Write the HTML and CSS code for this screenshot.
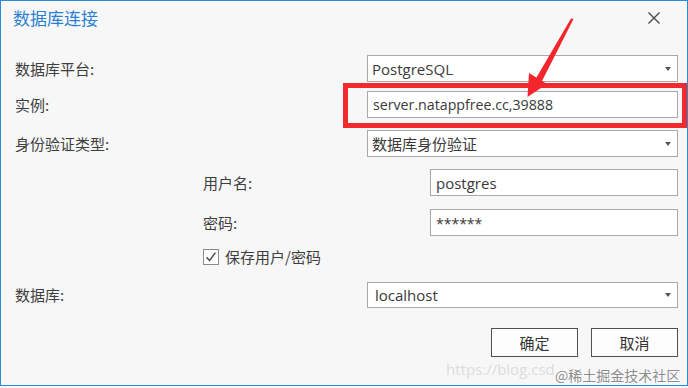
FILE: index.html
```html
<!DOCTYPE html>
<html lang="zh-CN">
<head>
<meta charset="utf-8">
<title>数据库连接</title>
<link rel="stylesheet" href="styles.css">
</head>
<body>
<div class="window">
  <div class="titlebar">
    <span class="title">数据库连接</span>
    <svg class="close" width="14" height="14" viewBox="0 0 14 14"><path d="M1.5 1.5 L12.5 12.5 M12.5 1.5 L1.5 12.5" stroke="#4a4a4a" stroke-width="1.4" fill="none"/></svg>
  </div>
  <div class="form">
    <div class="row r1">
      <span class="lbl">数据库平台:</span>
      <div class="field select">PostgreSQL<span class="caret"></span></div>
    </div>
    <div class="row r2">
      <span class="lbl">实例:</span>
      <div class="field inst">server.natappfree.cc,39888</div>
    </div>
    <div class="row r3">
      <span class="lbl">身份验证类型:</span>
      <div class="field select">数据库身份验证<span class="caret"></span></div>
    </div>
    <div class="row sub r4">
      <span class="lbl">用户名:</span>
      <div class="field">postgres</div>
    </div>
    <div class="row sub r5">
      <span class="lbl">密码:</span>
      <div class="field pw">******</div>
    </div>
    <div class="row sub r6">
      <span class="check">
        <svg width="16" height="16" viewBox="0 0 16 16"><rect x="0.5" y="0.5" width="15" height="15" fill="#fff" stroke="#8a8a8a"/><path d="M3.5 8.2 L6.6 11.6 L12.4 3.6" stroke="#555" stroke-width="1.6" fill="none"/></svg>
      </span>
      <span class="check-lbl">保存用户/密码</span>
    </div>
    <div class="row r7">
      <span class="lbl">数据库:</span>
      <div class="field select loc">localhost<span class="caret"></span></div>
    </div>
  </div>
  <div class="actions">
    <button class="btn">确定</button>
    <button class="btn">取消</button>
  </div>

  <div class="highlight"></div>
  <svg class="arrow" width="688" height="388" viewBox="0 0 688 388">
    <polygon points="573.5,19 571,18.5 535,80 541,83" fill="#f2262c"/>
    <polygon points="527.5,97 529,73 547,84" fill="#f2262c"/>
  </svg>
  <div class="wm-url">https://blog.csd</div>
  <div class="wm">@稀土掘金技术社区</div>
</div>
</body>
</html>
```

FILE: styles.css
```css
* { box-sizing: border-box; }
html, body { margin: 0; padding: 0; }
body {
  width: 688px;
  height: 388px;
  background: #f7f7f7;
  font-family: "Noto Sans CJK SC", "Noto Sans", sans-serif;
  color: #3e3e3e;
  overflow: hidden;
}
.window {
  position: relative;
  width: 688px;
  height: 386px;
  border: 1px solid #2a8ad8;
  background: #f7f7f7;
}
.titlebar {
  height: 33px;
  display: flex;
  align-items: center;
  justify-content: space-between;
  padding-left: 12px;
  padding-right: 26px;
}
.title {
  font-size: 17px;
  color: #2b7fd2;
  line-height: 20px;
}
.close { display: block; }
.form {
  display: flex;
  flex-direction: column;
  padding: 0 9px 0 14px;
}
.row {
  display: flex;
  align-items: center;
  height: 27px;
}
.lbl {
  font-size: 15px;
  line-height: 20px;
  width: 352px;
  flex: none;
}
.sub { padding-left: 188px; }
.sub .lbl { width: 227px; }
.r1 { margin-top: 21px; }
.r2 { margin-top: 9px; }
.r3 { margin-top: 12px; }
.r4 { margin-top: 12px; }
.r5 { margin-top: 13px; }
.r6 { margin-top: 7px; }
.r7 { margin-top: 12px; height: 26px; }
.field {
  flex: 1;
  height: 100%;
  background: #fff;
  border: 1px solid #a9a9a9;
  display: flex;
  align-items: center;
  padding-left: 5px;
  font-family: "Open Sans", "Noto Sans CJK SC", sans-serif;
  font-size: 15px;
  color: #3a3a3a;
  position: relative;
}
.select { padding-left: 4px; }
.inst { font-size: 14.2px; }
.loc { padding-left: 7px; }
.pw { font-size: 14px; padding-top: 2px; }
.caret {
  position: absolute;
  right: 6px;
  top: 50%;
  margin-top: -2px;
  width: 0;
  height: 0;
  border-left: 3px solid transparent;
  border-right: 3px solid transparent;
  border-top: 4px solid #555;
}
.check { display: flex; width: 22px; flex: none; }
.check svg { display: block; }
.check-lbl { font-size: 15px; line-height: 20px; }
.actions {
  display: flex;
  justify-content: flex-end;
  gap: 13px;
  padding-right: 9px;
  margin-top: 20px;
}
.btn {
  width: 87px;
  height: 29px;
  background: #fdfdfd;
  border: 1px solid #4f4f4f;
  font-family: "Noto Sans CJK SC", sans-serif;
  font-size: 15px;
  color: #333;
  padding: 0;
}
.highlight {
  position: absolute;
  left: 342px;
  top: 82px;
  width: 344px;
  height: 45px;
  border: 5px solid #f02a2e;
}
.arrow {
  position: absolute;
  left: -1px;
  top: -1px;
  pointer-events: none;
}
.wm-url {
  position: absolute;
  left: 445px;
  top: 358px;
  font-family: "Open Sans", sans-serif;
  font-size: 15px;
  color: #dcdcdc;
}
.wm {
  position: absolute;
  left: 554px;
  top: 364px;
  font-size: 14px;
  color: #8c8c8c;
  text-shadow: 0 0 2px #fff, 0 0 2px #fff;
}
```
